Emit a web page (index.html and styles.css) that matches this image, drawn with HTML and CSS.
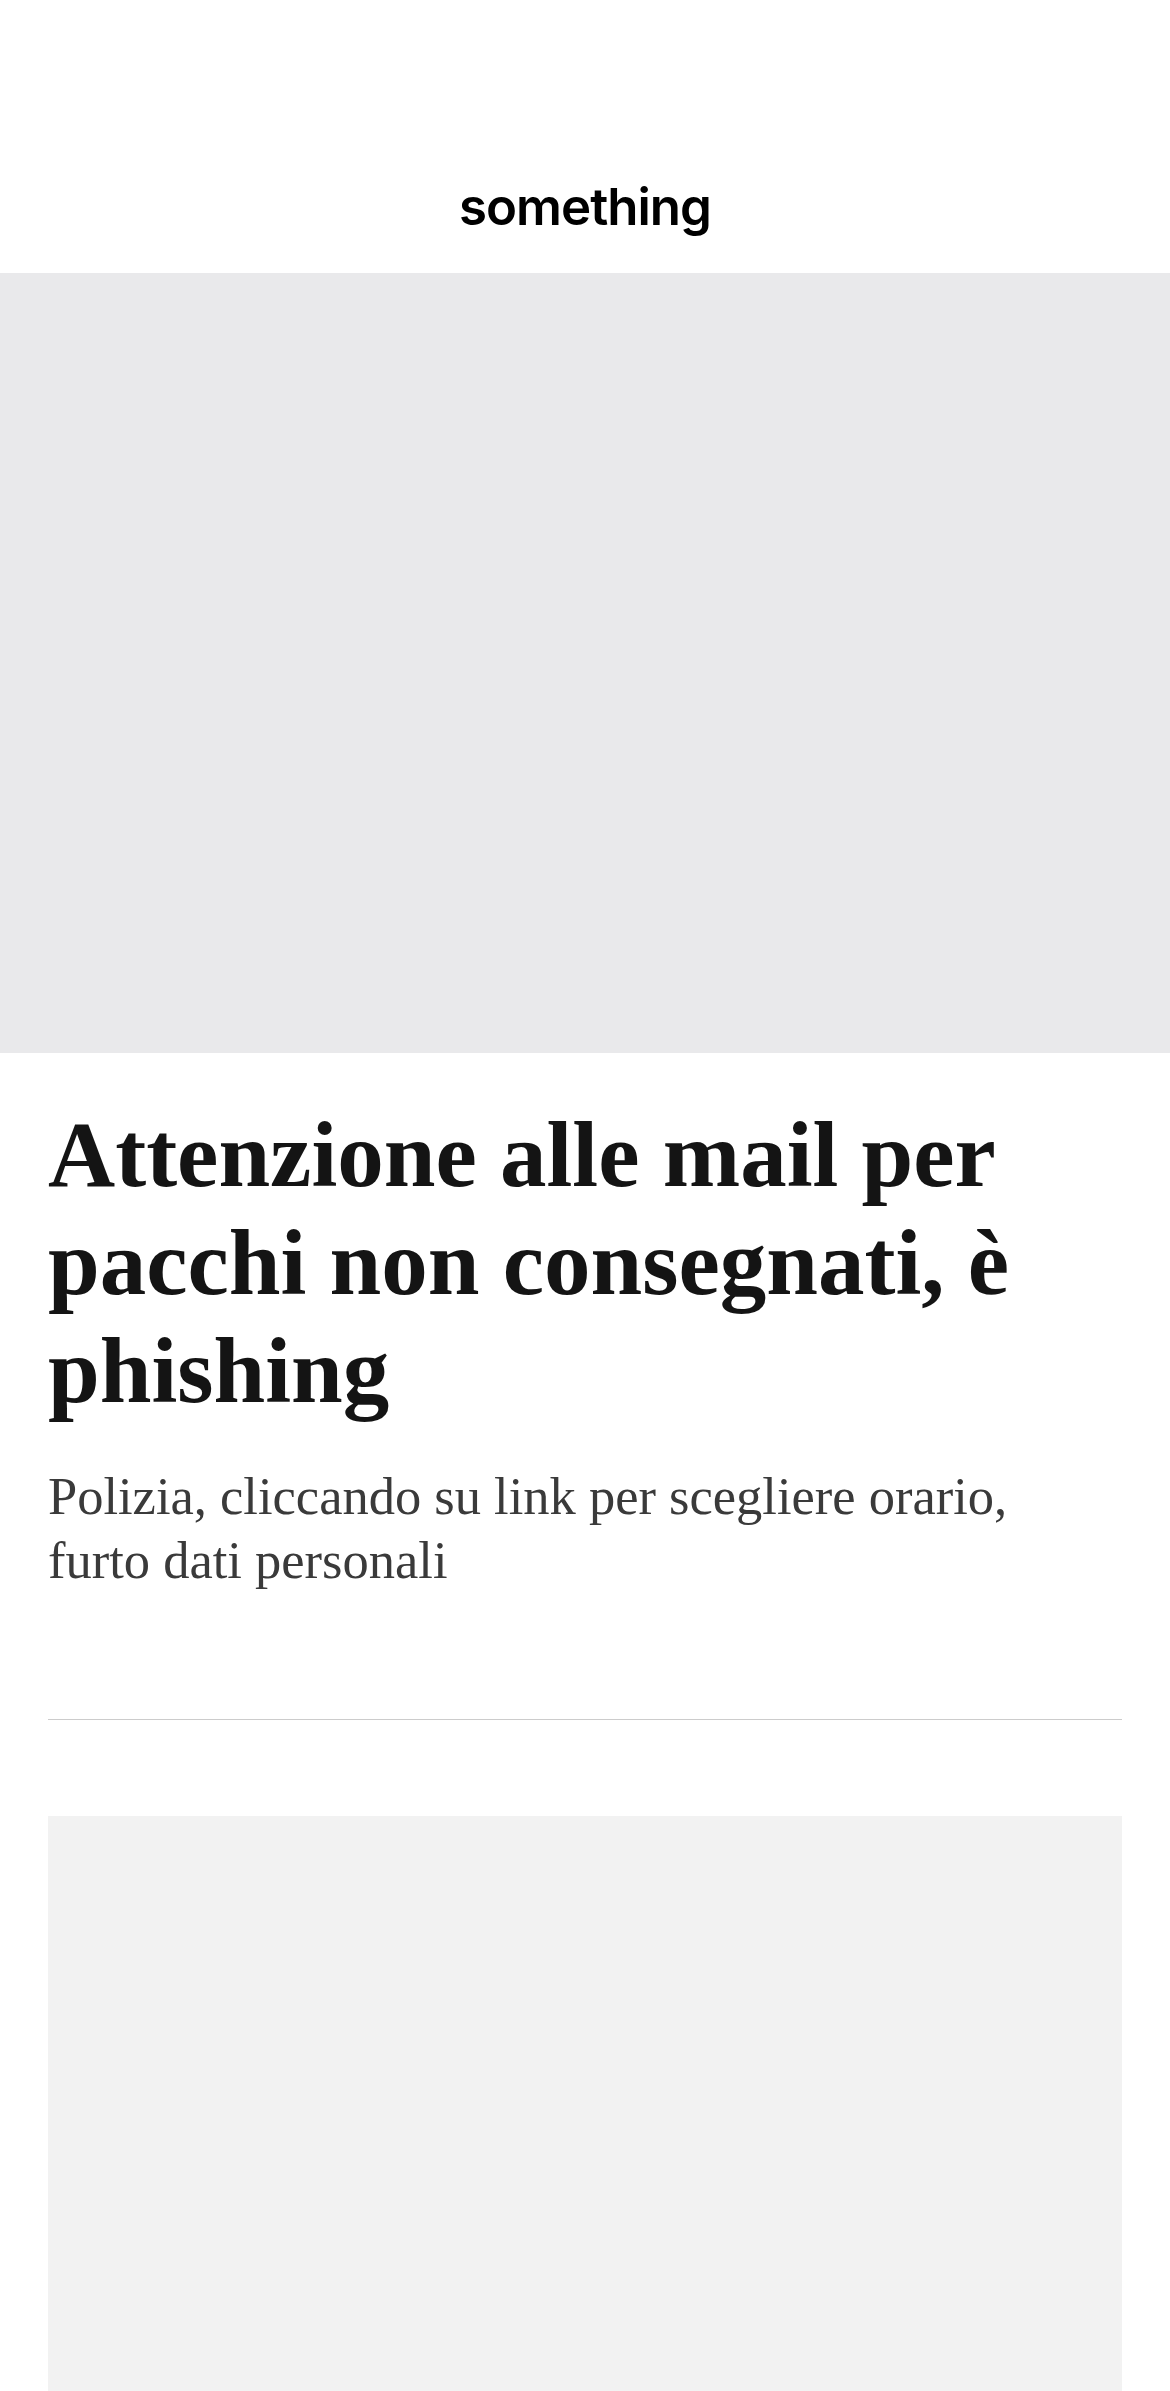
FILE: index.html
```html
<!DOCTYPE html>
<html lang="it">
<head>
<meta charset="utf-8">
<title>Attenzione alle mail per pacchi non consegnati, è phishing</title>
<link rel="stylesheet" href="styles.css">
</head>
<body>
<header class="site-header">
  <div class="brand">something</div>
</header>
<div class="hero"></div>
<main class="article">
  <h1 class="headline">Attenzione alle mail per pacchi non consegnati, è phishing</h1>
  <p class="standfirst">Polizia, cliccando su link per scegliere orario, furto dati personali</p>
  <hr class="divider">
  <div class="placeholder"></div>
</main>
</body>
</html>
```
FILE: styles.css
```css
html, body {
  margin: 0;
  padding: 0;
  background: #ffffff;
}
body {
  font-family: "Liberation Serif", serif;
  color: #141414;
  overflow-x: hidden;
}
.site-header {
  height: 273px;
  display: flex;
  align-items: flex-end;
  justify-content: center;
  box-sizing: border-box;
  padding-bottom: 41px;
}
.brand {
  font-family: "Inter", "Noto Sans", sans-serif;
  font-weight: 600;
  font-size: 51px;
  letter-spacing: -1px;
  line-height: 1;
  color: #000;
}
.hero {
  height: 780px;
  background: #e9e9eb;
}
.article {
  padding: 0 48px;
}
.headline {
  margin: 48px 0 0;
  font-family: "Liberation Serif", serif;
  font-weight: 700;
  font-size: 93px;
  line-height: 108px;
  color: #141414;
}
.standfirst {
  margin: 39px 0 0;
  font-family: "Liberation Serif", serif;
  font-size: 52.5px;
  line-height: 64px;
  color: #3a3a3a;
}
.divider {
  margin: 127px 0 0;
  border: 0;
  border-top: 1px solid #cccccc;
  height: 0;
}
.placeholder {
  margin-top: 96px;
  height: 575px;
  background: #f2f2f2;
}
```
